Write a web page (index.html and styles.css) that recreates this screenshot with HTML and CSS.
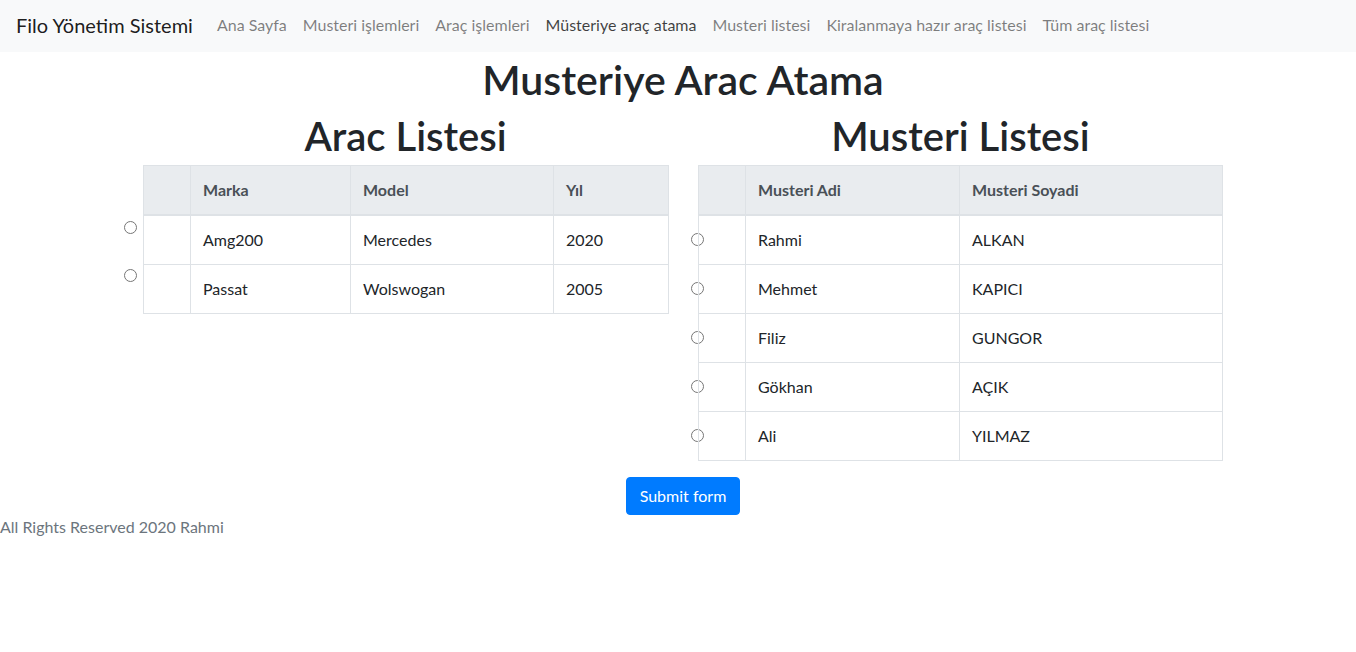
FILE: index.html
```html
<!DOCTYPE html>
<html lang="tr">
<head>
<meta charset="utf-8">
<title>Filo Yönetim Sistemi</title>
<link rel="stylesheet" href="styles.css">
</head>
<body>
<nav class="navbar">
  <a class="brand" href="#">Filo Yönetim Sistemi</a>
  <ul class="nav">
    <li><a class="nav-link" href="#">Ana Sayfa</a></li>
    <li><a class="nav-link" href="#">Musteri işlemleri</a></li>
    <li><a class="nav-link" href="#">Araç işlemleri</a></li>
    <li><a class="nav-link active" href="#">Müsteriye araç atama</a></li>
    <li><a class="nav-link" href="#">Musteri listesi</a></li>
    <li><a class="nav-link" href="#">Kiralanmaya hazır araç listesi</a></li>
    <li><a class="nav-link" href="#">Tüm araç listesi</a></li>
  </ul>
</nav>
<main class="page">
  <h1 class="title">Musteriye Arac Atama</h1>
  <form class="cols">
    <section class="col">
      <h1 class="col-title">Arac Listesi</h1>
      <div class="left-wrap">
        <div class="radio-stack">
          <input class="radio" type="radio" name="arac">
          <input class="radio" type="radio" name="arac">
        </div>
        <table class="table">
          <colgroup><col class="w-sel"><col class="w-marka"><col class="w-model"><col class="w-yil"></colgroup>
          <thead>
            <tr><th></th><th>Marka</th><th>Model</th><th>Yıl</th></tr>
          </thead>
          <tbody>
            <tr><td></td><td>Amg200</td><td>Mercedes</td><td>2020</td></tr>
            <tr><td></td><td>Passat</td><td>Wolswogan</td><td>2005</td></tr>
          </tbody>
        </table>
      </div>
    </section>
    <section class="col">
      <h1 class="col-title">Musteri Listesi</h1>
      <table class="table">
        <colgroup><col class="w-sel"><col class="w-ad"><col class="w-soyad"></colgroup>
        <thead>
          <tr><th></th><th>Musteri Adi</th><th>Musteri Soyadi</th></tr>
        </thead>
        <tbody>
          <tr><td class="sel"><input class="radio cell-radio" type="radio" name="musteri"></td><td>Rahmi</td><td>ALKAN</td></tr>
          <tr><td class="sel"><input class="radio cell-radio" type="radio" name="musteri"></td><td>Mehmet</td><td>KAPICI</td></tr>
          <tr><td class="sel"><input class="radio cell-radio" type="radio" name="musteri"></td><td>Filiz</td><td>GUNGOR</td></tr>
          <tr><td class="sel"><input class="radio cell-radio" type="radio" name="musteri"></td><td>Gökhan</td><td>AÇIK</td></tr>
          <tr><td class="sel"><input class="radio cell-radio" type="radio" name="musteri"></td><td>Ali</td><td>YILMAZ</td></tr>
        </tbody>
      </table>
    </section>
  </form>
  <div class="actions"><button class="btn" type="button">Submit form</button></div>
</main>
<footer class="footer">All Rights Reserved 2020 Rahmi</footer>
</body>
</html>
```
FILE: styles.css
```css
* { box-sizing: border-box; }
body {
  margin: 0;
  font-family: "Lato", "Noto Sans", sans-serif;
  font-size: 16px;
  line-height: 1.5;
  color: #212529;
  background: #fff;
}
a { text-decoration: none; }

.navbar {
  display: flex;
  align-items: center;
  height: 52px;
  padding: 0 16px 2px;
  background: #f8f9fa;
}
.brand {
  font-size: 20px;
  line-height: 30px;
  color: rgba(0, 0, 0, 0.9);
  margin-right: 16px;
}
.nav {
  display: flex;
  list-style: none;
  margin: 0;
  padding: 0;
}
.nav-link {
  display: block;
  padding: 0 8px;
  color: rgba(0, 0, 0, 0.5);
}
.nav-link.active { color: rgba(0, 0, 0, 0.75); }

.page { padding-left: 10px; }
.title {
  margin: 4px 0 0;
  font-size: 41px;
  font-weight: 600;
  line-height: 48px;
  text-align: center;
}
.cols {
  display: flex;
  align-items: flex-start;
  width: 1110px;
  margin: 0 auto;
}
.col {
  width: 555px;
  padding: 0 15px;
}
.col-title {
  margin: 8px 0 5px;
  font-size: 40px;
  font-weight: 600;
  line-height: 48px;
  text-align: center;
}
.left-wrap { display: flex; align-items: flex-start; }
.radio-stack {
  width: 13px;
  margin-left: -19px;
  margin-right: 6px;
  flex: none;
}
.radio {
  display: block;
  width: 13px;
  height: 13px;
  margin: 0;
}
.radio-stack .radio:first-child { margin-top: 56px; }
.radio-stack .radio + .radio { margin-top: 35px; }

.table {
  width: 100%;
  table-layout: fixed;
  border-collapse: collapse;
  margin-bottom: 16px;
  color: #212529;
}
.table th, .table td {
  padding: 12px;
  border: 1px solid #dee2e6;
  vertical-align: top;
  text-align: left;
}
.table thead th {
  background: #e9ecef;
  color: #495057;
  font-weight: 700;
  border-bottom: 2px solid #dee2e6;
}
.w-sel { width: 47px; }
.w-marka { width: 160px; }
.w-model { width: 203px; }
.w-yil { width: 115px; }
.w-ad { width: 214px; }
.w-soyad { width: 263px; }
.cell-radio { margin: 5px 0 0 -20px; }

.actions { display: flex; justify-content: center; }
.btn {
  font-family: inherit;
  font-size: 16px;
  line-height: 24px;
  padding: 6px 12px;
  color: #fff;
  background: #007bff;
  border: 1px solid #007bff;
  border-radius: 4px;
  width: 114px;
}
.footer {
  color: #6c757d;
  line-height: 24px;
}
```
